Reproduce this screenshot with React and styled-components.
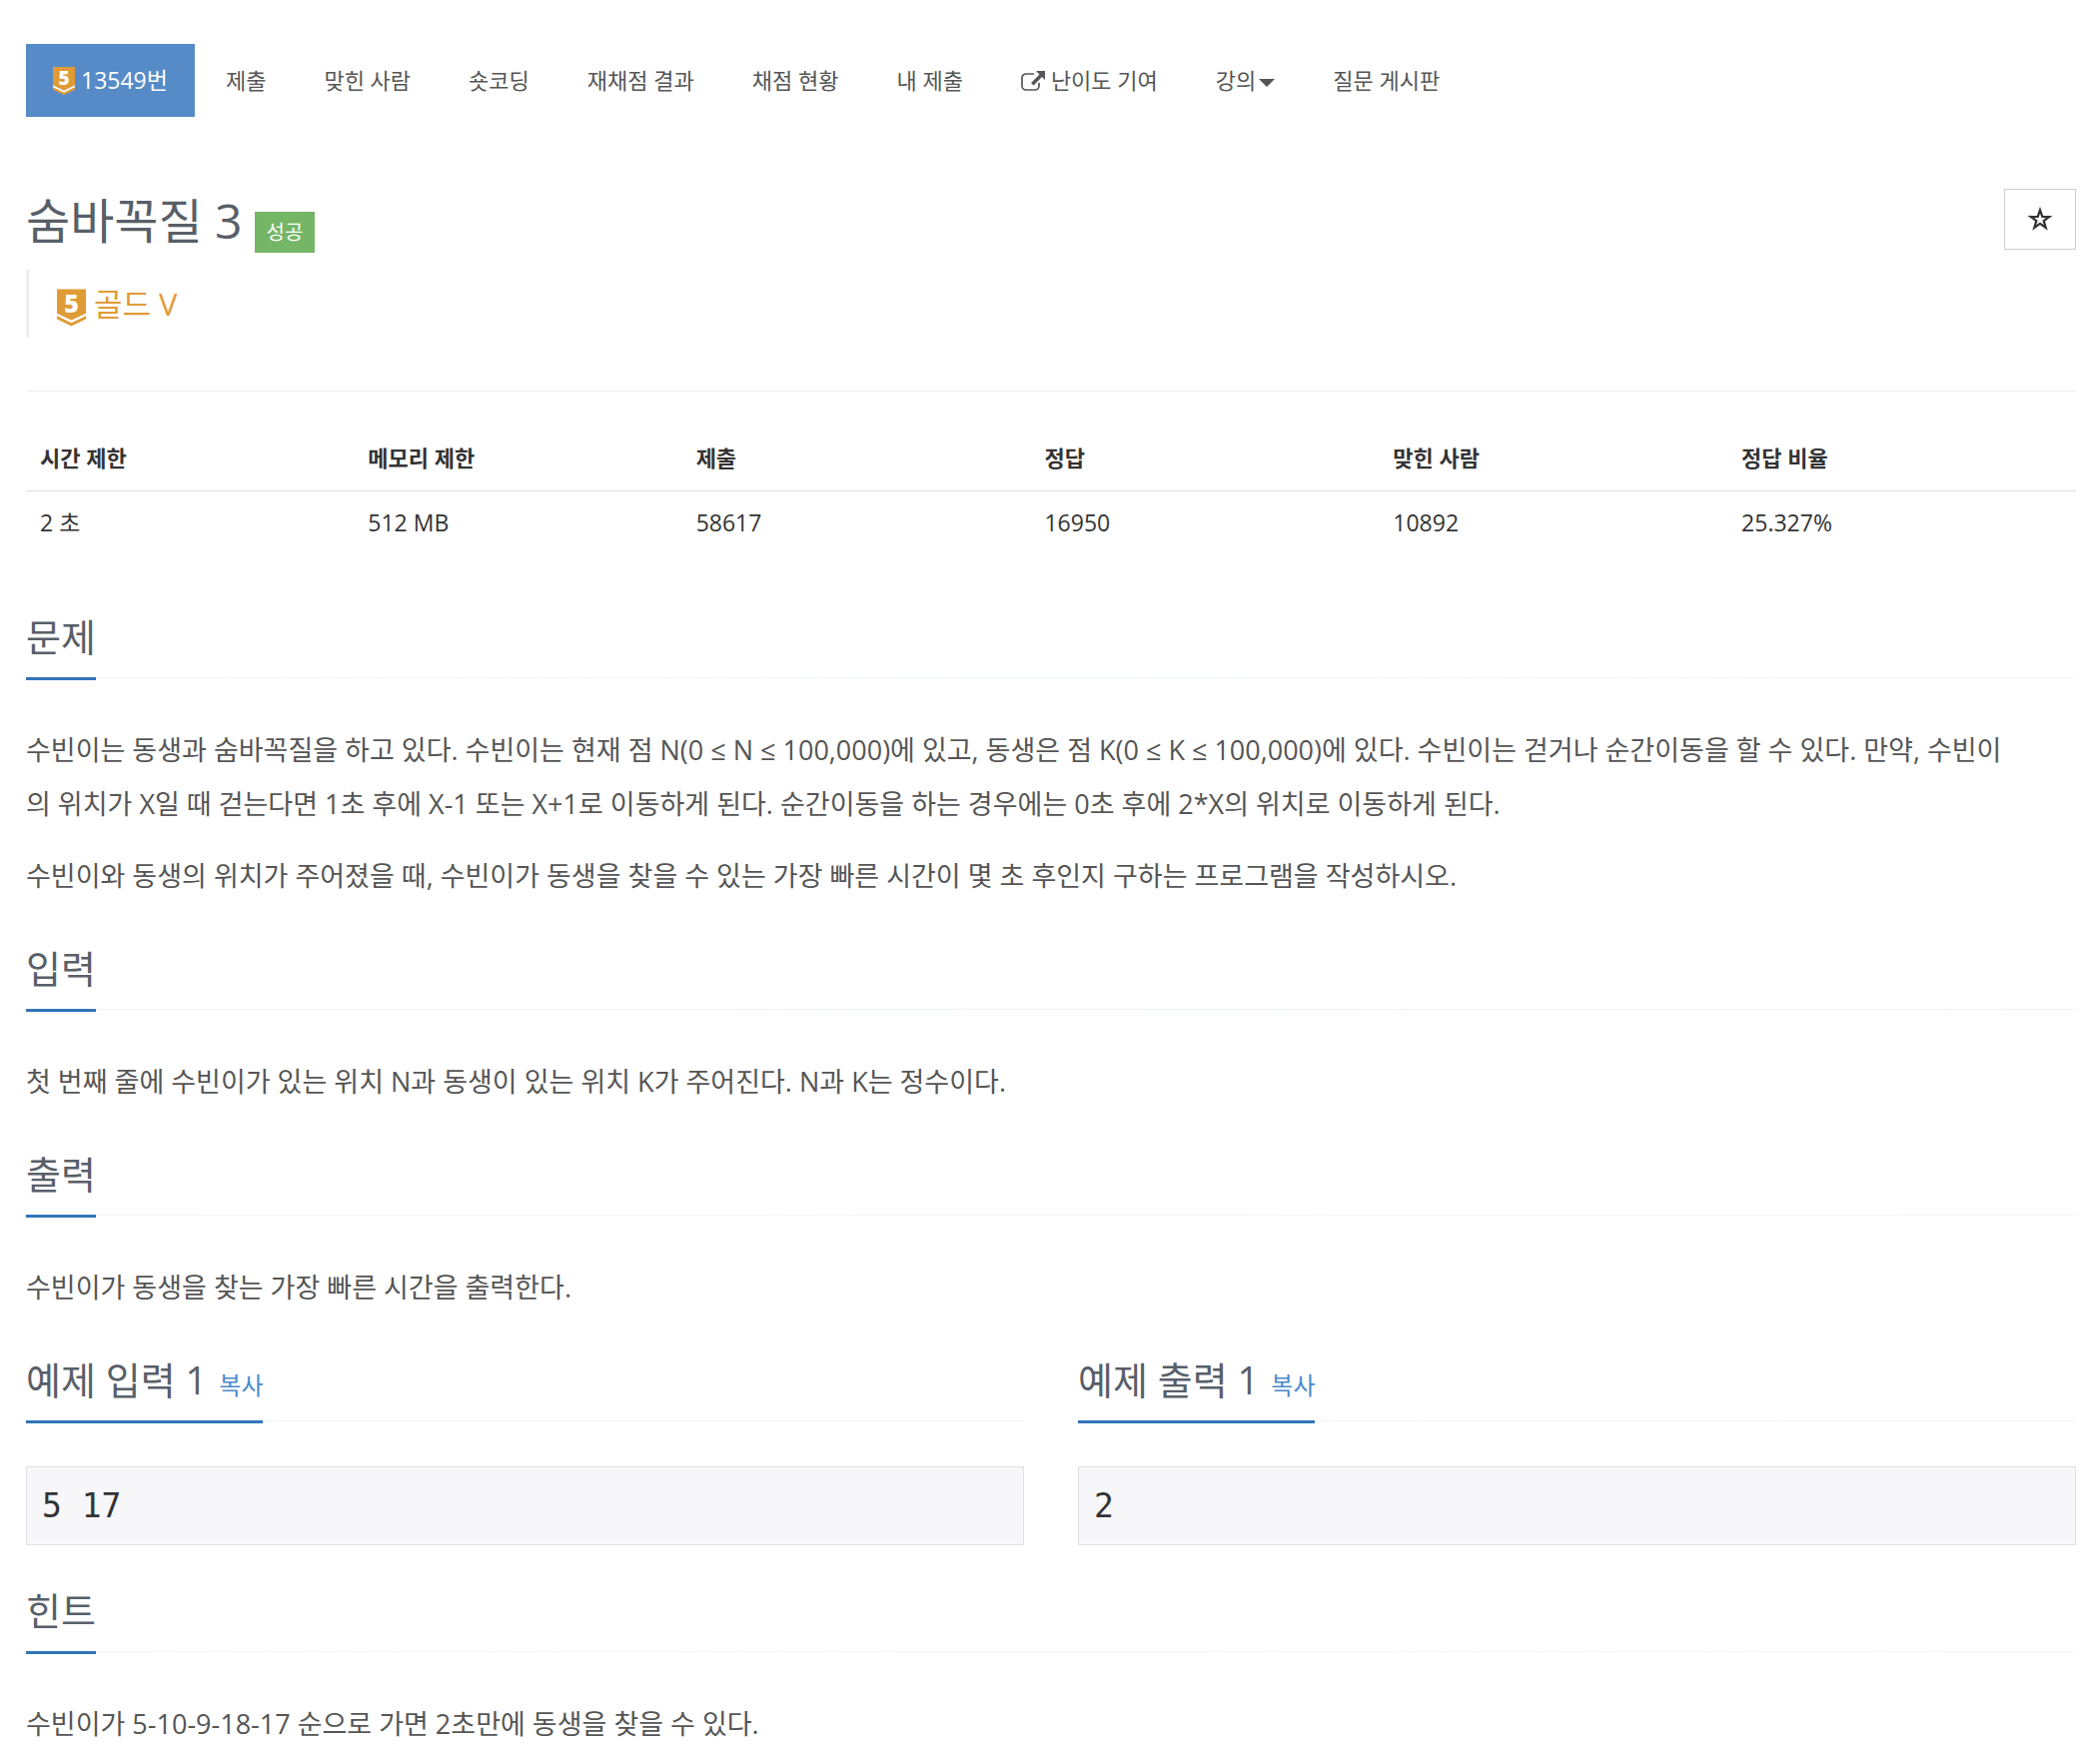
import React from 'react'
import styled, { createGlobalStyle } from 'styled-components'

const GlobalStyle = createGlobalStyle`
  * {
    box-sizing: border-box;
  }
  body {
    margin: 0;
    background-color: white;
    color: #333;
    font-family: "Open Sans", "Noto Sans CJK KR", sans-serif;
    font-size: 22px;
    line-height: 33px;
  }
`

const Container = styled.div`
  padding: 44px 24px 0 26px;
`

const Menu = styled.ul`
  display: flex;
  flex-wrap: wrap;
  gap: 4px;
  margin: 0;
  padding: 0;
  list-style: none;
`

const MenuLink = styled.a`
  display: flex;
  align-items: center;
  gap: ${props => props.$dropdown ? '3px' : '6px'};
  padding: 20px 27px;
  font-size: ${props => props.$active ? '23px' : '22px'};
  text-decoration: none;
  white-space: nowrap;
  color: ${props => props.$active ? 'white' : '#555'};
  background-color: ${props => props.$active ? '#568bc7' : 'transparent'};
`

const Caret = styled.span`
  margin-top: 4px;
  border-top: 8px solid;
  border-left: 8px solid transparent;
  border-right: 8px solid transparent;
`

const Header = styled.header`
  display: flex;
  justify-content: space-between;
  align-items: flex-start;
  margin-top: 72px;
`

const TitleRow = styled.div`
  display: flex;
  align-items: flex-end;
  gap: 12px;
`

const Title = styled.h1`
  margin: 0;
  font-size: 48px;
  font-weight: 400;
  line-height: 64px;
  color: #585f69;
`

const Label = styled.span`
  padding: 4px 12px;
  font-size: 20px;
  color: white;
  background-color: #74b566;
`

const StarButton = styled.button`
  display: flex;
  align-items: center;
  justify-content: center;
  width: 72px;
  height: 61px;
  padding: 0;
  border: 1px solid #ccc;
  background-color: white;
  color: #333;
  cursor: pointer;
`

const Tier = styled.blockquote`
  display: flex;
  align-items: flex-end;
  gap: 8px;
  height: 68px;
  margin: 17px 0 53px;
  padding: 0 0 11px 28px;
  border-left: 3px solid #eee;
  font-size: 31px;
  line-height: 46px;
  color: #e09b36;
`

const InfoTable = styled.table`
  width: 100%;
  border-collapse: collapse;
  table-layout: fixed;
  border-top: 1px solid #eee;
`

const Th = styled.th`
  width: ${props => props.$width};
  padding: 50px 14px 16px;
  text-align: left;
  border-bottom: 1px solid #ddd;
`

const Td = styled.td`
  padding: 15px 14px;
  font-size: 23px;
`

const Section = styled.section`
  margin-top: ${props => props.$first ? '57px' : '40px'};
`

const Headline = styled.div`
  display: flex;
  margin-bottom: 45px;
  border-bottom: 1px dotted #e4e9f0;
`

const Heading = styled.h2`
  margin: 0 0 -3px;
  padding-bottom: 16px;
  border-bottom: 3px solid #3174b9;
  font-size: 38px;
  font-weight: 400;
  line-height: 50px;
  color: #585f69;
`

const CopyButton = styled.button`
  margin-left: 12px;
  padding: 0;
  border: none;
  background: none;
  font-family: inherit;
  font-size: 24px;
  color: #4a89ca;
  cursor: pointer;
`

const Text = styled.p`
  margin: 0 0 18px;
  font-size: 27px;
  line-height: 54px;
  color: #555;
  word-break: break-all;
  &:last-child {
    margin-bottom: 0;
  }
`

const Samples = styled.div`
  display: grid;
  grid-template-columns: 1fr 1fr;
  column-gap: 54px;
`

const Sample = styled.pre`
  margin: 0;
  padding: 15px;
  border: 1px solid #e0e1e5;
  background-color: #f7f7f9;
  font-family: "DejaVu Sans Mono", "Noto Sans CJK KR", monospace;
  font-size: 33px;
  line-height: 47px;
`

const TierIcon = ({ width, height }) => (
  <svg width={width} height={height} viewBox="0 0 22 28" overflow="visible" aria-hidden="true">
    <path d="M0 18l11 5.500l11-5.500v3l-11 5.500l-11-5.500z" fill="white" />
    <path d="M0 0h22v18.300l-11 5.200l-11-5.200z" fill="#e09b36" />
    <path d="M0 20.300l11 5.200l11-5.200v2.500l-11 5.200l-11-5.200z" fill="#e09b36" />
    <text x="11" y="17.500" textAnchor="middle" fontSize="19" fontWeight="800" fill="white">5</text>
  </svg>
)

const ExternalIcon = () => (
  <svg width="24" height="20" viewBox="0 0 24 20" aria-hidden="true">
    <path
      d="M13 3H5a4 4 0 0 0-4 4v8a4 4 0 0 0 4 4h9a4 4 0 0 0 4-4v-3"
      fill="none"
      stroke="currentColor"
      strokeWidth="1.700"
    />
    <path d="M15 0h9v9l-3-3l-8.500 8.500l-2.500-2.500l8.500-8.500z" fill="currentColor" />
  </svg>
)

const StarIcon = () => (
  <svg width="28" height="28" viewBox="0 0 26 26" aria-hidden="true">
    <path
      d="M13 4L15.120 10.090L21.560 10.220L16.420 14.110L18.290 20.280L13 16.600L7.710 20.280L9.580 14.110L4.440 10.220L10.880 10.090z"
      fill="none"
      stroke="currentColor"
      strokeWidth="2.100"
      strokeMiterlimit="10"
    />
  </svg>
)

const menus = [
  { name: '13549번', active: true, tier: true },
  { name: '제출' },
  { name: '맞힌 사람' },
  { name: '숏코딩' },
  { name: '재채점 결과' },
  { name: '채점 현황' },
  { name: '내 제출' },
  { name: '난이도 기여', external: true },
  { name: '강의', dropdown: true },
  { name: '질문 게시판' },
]

const info = [
  { name: '시간 제한', value: '2 초', width: '16%' },
  { name: '메모리 제한', value: '512 MB', width: '16%' },
  { name: '제출', value: '58617', width: '17%' },
  { name: '정답', value: '16950', width: '17%' },
  { name: '맞힌 사람', value: '10892', width: '17%' },
  { name: '정답 비율', value: '25.327%', width: '17%' },
]

const ProblemSection = ({ title, copy, first, children }) => (
  <Section $first={first}>
    <Headline>
      <Heading>
        {title}
        {copy && <CopyButton type="button">복사</CopyButton>}
      </Heading>
    </Headline>
    {children}
  </Section>
)

const App = () => {
  return (
    <Container>
      <GlobalStyle />
      <nav>
        <Menu>
          {menus.map(menu => (
            <li key={menu.name}>
              <MenuLink href="#" $active={menu.active} $dropdown={menu.dropdown}>
                {menu.tier && <TierIcon width={22} height={28} />}
                {menu.external && <ExternalIcon />}
                {menu.name}
                {menu.dropdown && <Caret />}
              </MenuLink>
            </li>
          ))}
        </Menu>
      </nav>
      <Header>
        <TitleRow>
          <Title>숨바꼭질 3</Title>
          <Label>성공</Label>
        </TitleRow>
        <StarButton type="button" aria-label="즐겨찾기">
          <StarIcon />
        </StarButton>
      </Header>
      <Tier>
        <TierIcon width={29} height={38} />
        골드 V
      </Tier>
      <InfoTable>
        <thead>
          <tr>
            {info.map(item => <Th key={item.name} $width={item.width}>{item.name}</Th>)}
          </tr>
        </thead>
        <tbody>
          <tr>
            {info.map(item => <Td key={item.name}>{item.value}</Td>)}
          </tr>
        </tbody>
      </InfoTable>
      <ProblemSection title="문제" first>
        <Text>
          수빈이는 동생과 숨바꼭질을 하고 있다. 수빈이는 현재 점 N(0 ≤ N ≤ 100,000)에 있고, 동생은 점 K(0 ≤ K ≤ 100,000)에 있다. 수빈이는 걷거나 순간이동을 할 수 있다. 만약, 수빈이
          <br />
          의 위치가 X일 때 걷는다면 1초 후에 X-1 또는 X+1로 이동하게 된다. 순간이동을 하는 경우에는 0초 후에 2*X의 위치로 이동하게 된다.
        </Text>
        <Text>수빈이와 동생의 위치가 주어졌을 때, 수빈이가 동생을 찾을 수 있는 가장 빠른 시간이 몇 초 후인지 구하는 프로그램을 작성하시오.</Text>
      </ProblemSection>
      <ProblemSection title="입력">
        <Text>첫 번째 줄에 수빈이가 있는 위치 N과 동생이 있는 위치 K가 주어진다. N과 K는 정수이다.</Text>
      </ProblemSection>
      <ProblemSection title="출력">
        <Text>수빈이가 동생을 찾는 가장 빠른 시간을 출력한다.</Text>
      </ProblemSection>
      <Samples>
        <ProblemSection title="예제 입력 1" copy>
          <Sample>5 17</Sample>
        </ProblemSection>
        <ProblemSection title="예제 출력 1" copy>
          <Sample>2</Sample>
        </ProblemSection>
      </Samples>
      <ProblemSection title="힌트">
        <Text>수빈이가 5-10-9-18-17 순으로 가면 2초만에 동생을 찾을 수 있다.</Text>
      </ProblemSection>
    </Container>
  )
}

export default App
